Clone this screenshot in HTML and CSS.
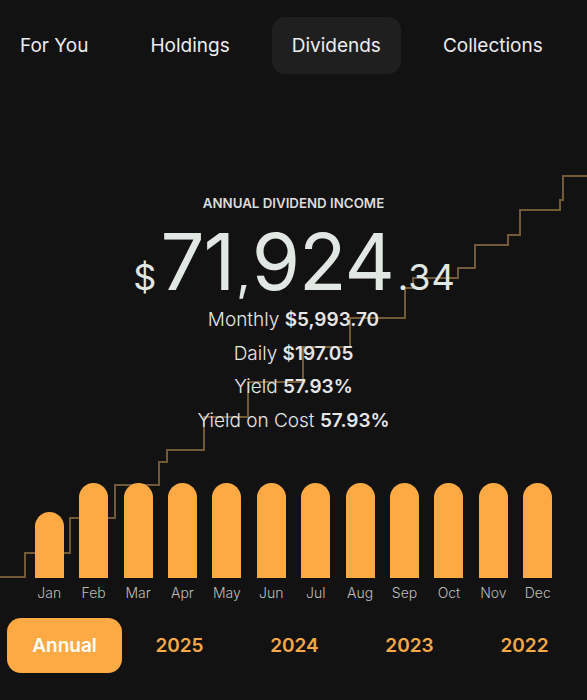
FILE: index.html
```html
<!DOCTYPE html>
<html lang="en">
<head>
  <meta charset="UTF-8">
  <title>Dividends</title>
  <link rel="stylesheet" href="styles.css">
</head>
<body>
  <div class="page">
    <svg class="trend" width="587" height="700" viewBox="0 0 587 700">
      <polyline points="0,577 25,577 25,553 70,553 70,518 115,518 115,485 159,485 159,462 167,462 167,450 204,450 204,417 248,417 248,382 303,382 303,347 350,347 350,318 405,318 405,288 413,288 413,278 458,278 458,268 475,268 475,245 508,245 508,235 520,235 520,210 560,210 560,200 563,200 563,176 587,176" />
    </svg>

    <nav class="tabs">
      <a class="tab">For You</a>
      <a class="tab">Holdings</a>
      <a class="tab active">Dividends</a>
      <a class="tab">Collections</a>
    </nav>

    <section class="summary">
      <h1 class="title">ANNUAL DIVIDEND INCOME</h1>
      <div class="total">
        <span class="cur">$</span><span class="whole">71<span class="comma">,</span>924</span><span class="cents">.34</span>
      </div>
      <p class="stat">Monthly <b>$5,993.70</b></p>
      <p class="stat">Daily <b>$197.05</b></p>
      <p class="stat">Yield <b>57.93%</b></p>
      <p class="stat">Yield on Cost <b>57.93%</b></p>
    </section>

    <div class="chart">
      <div class="col"><div class="bar" style="height: 66px"></div><span>Jan</span></div>
      <div class="col"><div class="bar" style="height: 95px"></div><span>Feb</span></div>
      <div class="col"><div class="bar" style="height: 95px"></div><span>Mar</span></div>
      <div class="col"><div class="bar" style="height: 95px"></div><span>Apr</span></div>
      <div class="col"><div class="bar" style="height: 95px"></div><span>May</span></div>
      <div class="col"><div class="bar" style="height: 95px"></div><span>Jun</span></div>
      <div class="col"><div class="bar" style="height: 95px"></div><span>Jul</span></div>
      <div class="col"><div class="bar" style="height: 95px"></div><span>Aug</span></div>
      <div class="col"><div class="bar" style="height: 95px"></div><span>Sep</span></div>
      <div class="col"><div class="bar" style="height: 95px"></div><span>Oct</span></div>
      <div class="col"><div class="bar" style="height: 95px"></div><span>Nov</span></div>
      <div class="col"><div class="bar" style="height: 95px"></div><span>Dec</span></div>
    </div>

    <div class="years">
      <button class="year active">Annual</button>
      <button class="year">2025</button>
      <button class="year">2024</button>
      <button class="year">2023</button>
      <button class="year">2022</button>
    </div>
  </div>
</body>
</html>
```

FILE: styles.css
```css
body {
  margin: 0;
  background: #121212;
  font-family: Inter, "Noto Sans", sans-serif;
  color: #e6eae7;
}
.page {
  position: relative;
  width: 587px;
  height: 700px;
  overflow: hidden;
}
.trend {
  position: absolute;
  top: 0;
  left: 0;
}
.trend polyline {
  fill: none;
  stroke: #735a36;
  stroke-width: 2;
}
.tabs {
  position: relative;
  display: flex;
  gap: 22px;
  padding-top: 17px;
}
.tab {
  padding: 0 20px;
  height: 57px;
  line-height: 57px;
  font-size: 19px;
  color: #ececec;
  border-radius: 13px;
}
.tab.active {
  background: #1f1f1f;
}
.summary {
  position: relative;
  text-align: center;
  margin-top: 121px;
}
.title {
  margin: 0;
  font-size: 13.3px;
  line-height: 16px;
  font-weight: 600;
  color: #dcdcdc;
}
.total {
  margin-top: 12px;
  height: 78px;
  line-height: 78px;
  color: #e1e7e3;
  white-space: nowrap;
}
.cur {
  font-size: 36px;
  margin-right: 6px;
  position: relative;
  left: 2px;
}
.whole {
  font-size: 78px;
  font-weight: 400;
  letter-spacing: -1px;
}
.comma {
  font-size: 50px;
  margin: 0 2px;
}
.cents {
  font-size: 36px;
  letter-spacing: 1px;
  margin-left: 4px;
}
.stat {
  margin: 0;
  font-size: 19px;
  line-height: 33.7px;
  font-weight: 300;
  color: #e6e6e6;
}
.stat:first-of-type {
  margin-top: 2px;
}
.stat b {
  font-weight: 600;
}
.chart {
  position: relative;
  display: grid;
  grid-template-columns: repeat(12, 1fr);
  padding: 0 27px;
  margin-top: 45px;
  align-items: end;
}
.col {
  display: flex;
  flex-direction: column;
  align-items: center;
  justify-content: flex-end;
  height: 119px;
}
.bar {
  width: 29px;
  background: #fdaa45;
  border-radius: 15px 15px 0 0;
}
.col span {
  margin-top: 6px;
  font-size: 14px;
  line-height: 18px;
  font-weight: 300;
  color: #bdbdbd;
}
.years {
  position: relative;
  display: grid;
  grid-template-columns: repeat(5, 1fr);
  padding: 0 5px 0 7px;
  margin-top: 16px;
}
.year {
  height: 55px;
  border: none;
  border-radius: 14px;
  background: none;
  font-family: inherit;
  font-size: 19px;
  font-weight: 600;
  color: #f6a946;
}
.year.active {
  background: #fdaa45;
  color: #fff;
}
```
